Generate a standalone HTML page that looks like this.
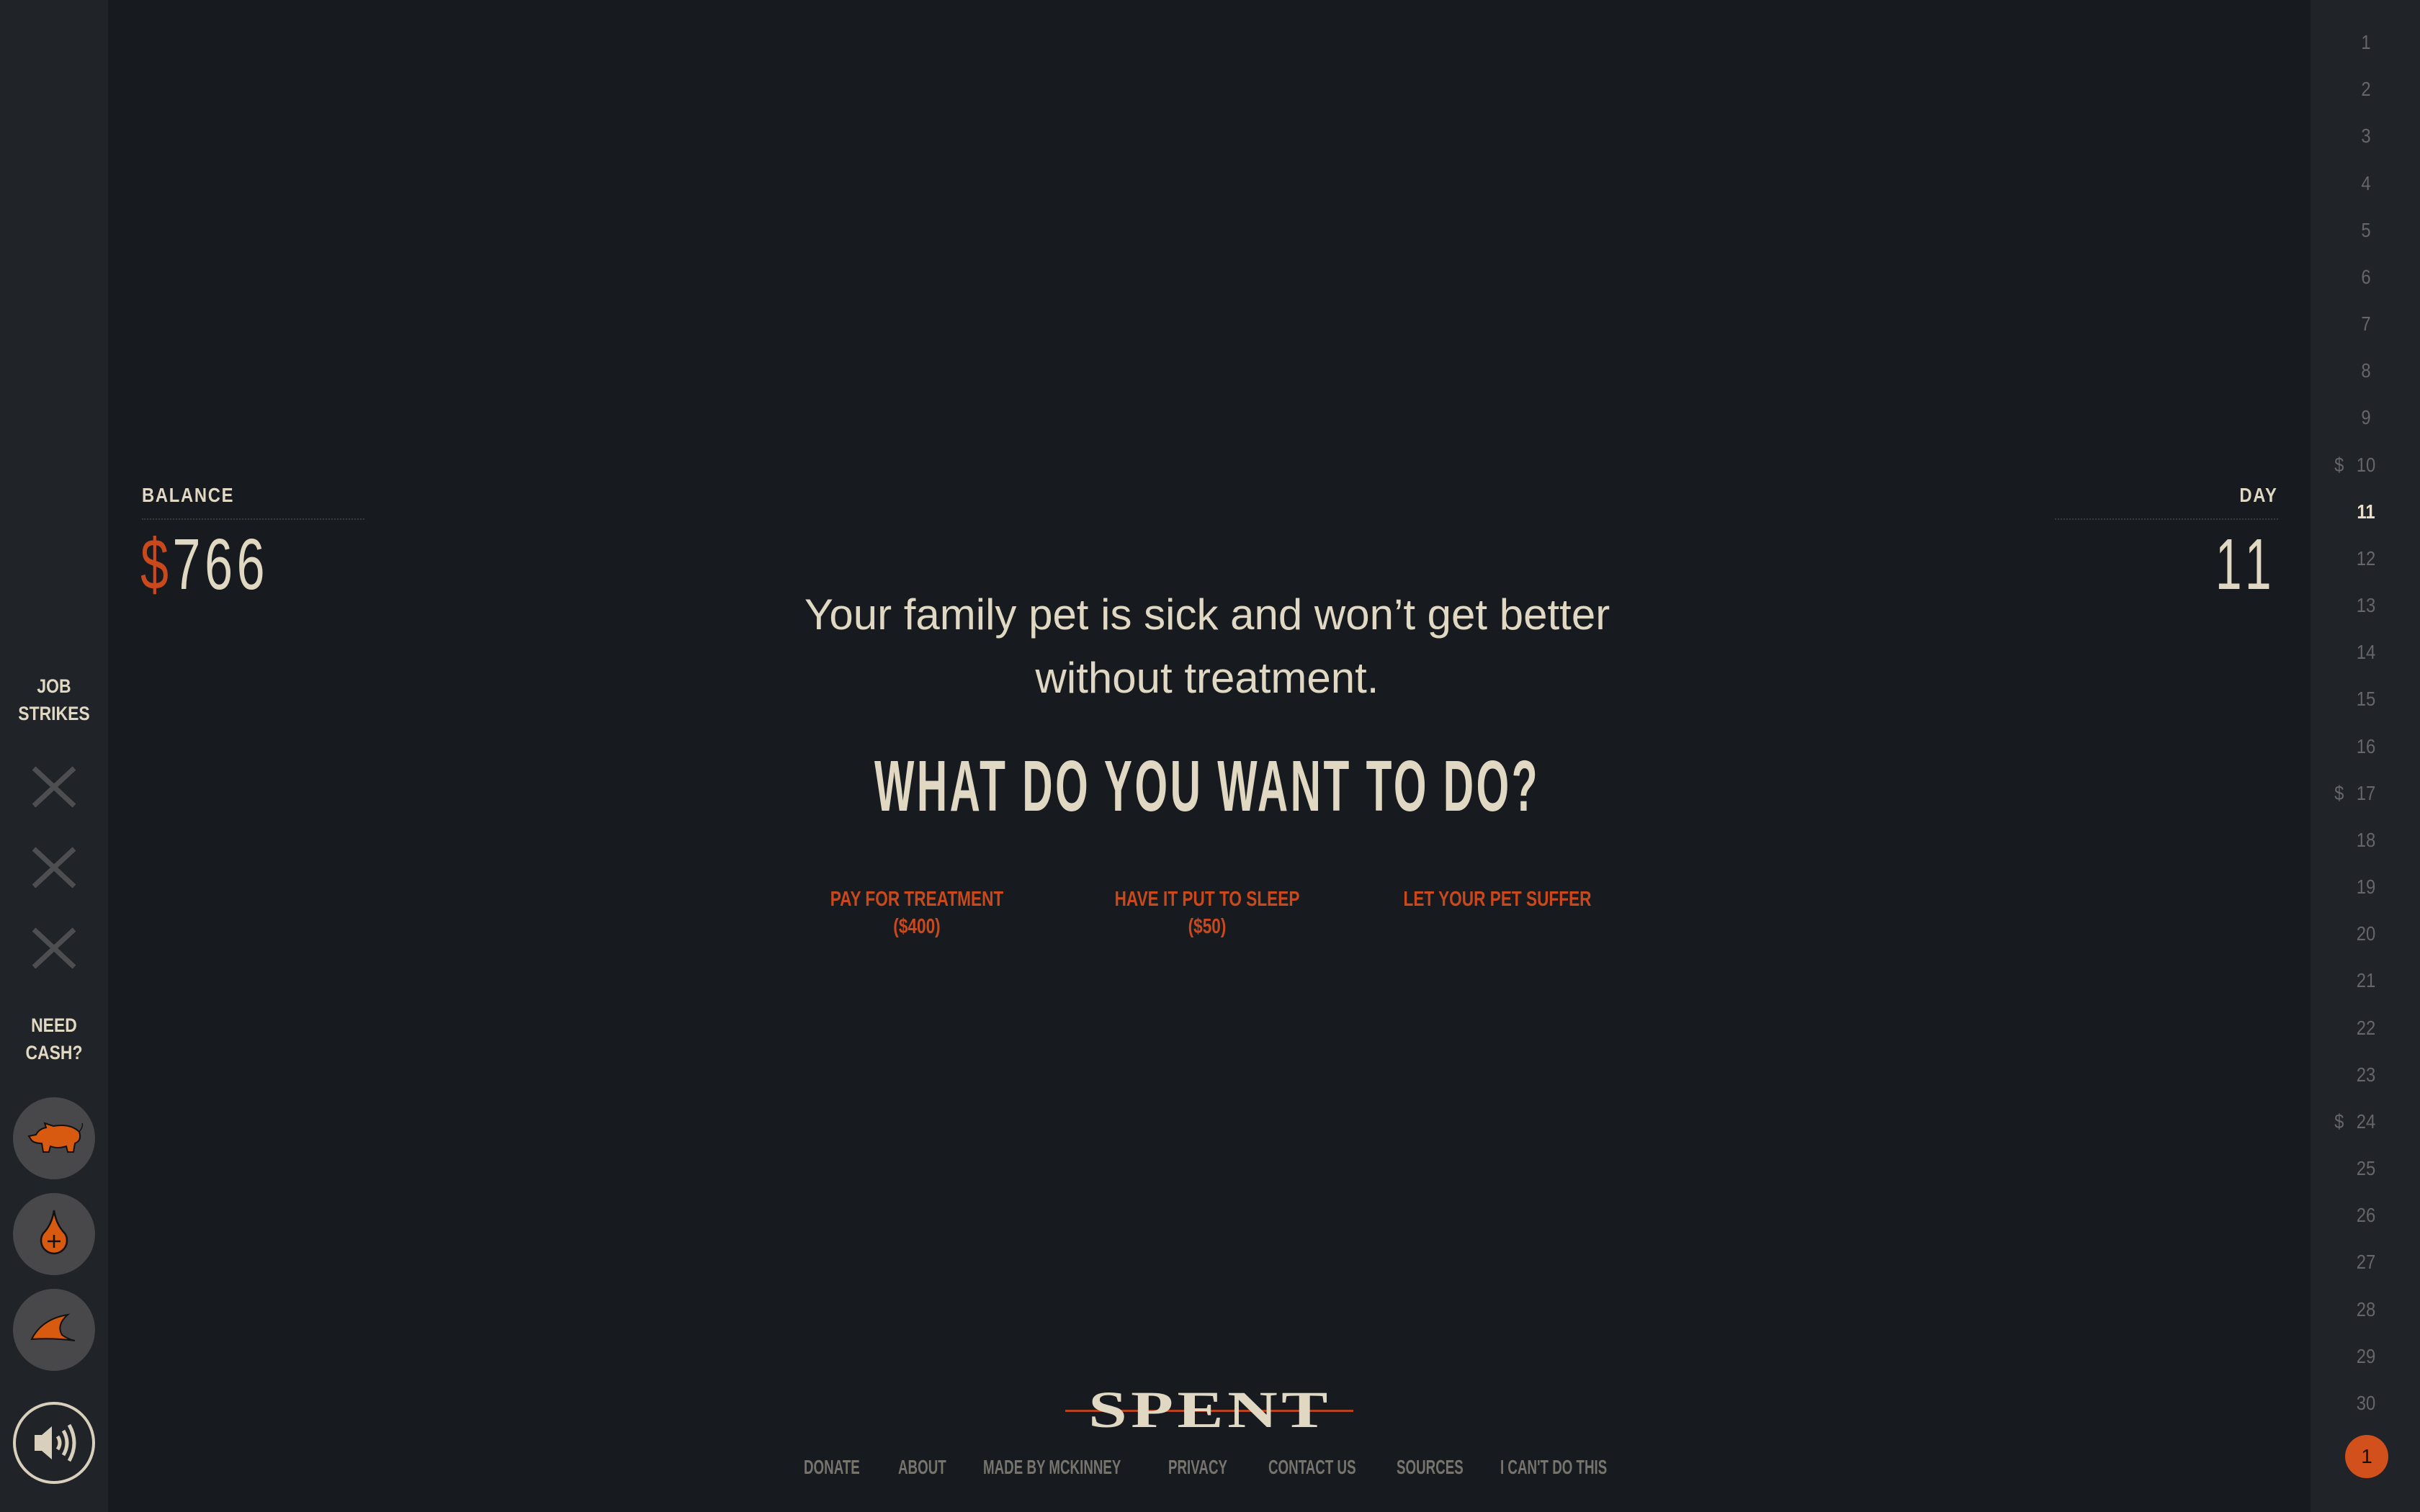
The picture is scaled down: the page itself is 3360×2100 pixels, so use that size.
<!DOCTYPE html>
<html><head><meta charset="utf-8"><style>
*{margin:0;padding:0;box-sizing:border-box}
body{width:3360px;height:2100px;background:#171b1f;position:relative;overflow:hidden;font-family:"Liberation Sans Narrow","Liberation Sans",sans-serif;color:#e0d8c2}
.abs{position:absolute}
.c{position:absolute;white-space:nowrap;transform:translateX(-50%) scaleX(.78)}
#lside{left:0;top:0;width:150px;height:2100px;background:#202327}
#rside{left:3208px;top:0;width:152px;height:2100px;background:#202327}
.lab{position:absolute;left:75px;transform:translateX(-50%) scaleX(.85);text-align:center;font-size:27px;line-height:38px;font-weight:bold;color:#e0d8c2;white-space:nowrap}
.circ{position:absolute;left:18px;width:114px;height:114px;border-radius:50%;background:#48474a}
.num{position:absolute;width:60px;left:3255px;text-align:center;font-size:28px;color:#66666a;transform:scaleX(.85)}
.dol{position:absolute;left:3240px;font-size:28px;color:#66666a;transform:scaleX(.85)}
.opt{color:#c9491c;font-size:29px;line-height:38px;font-weight:bold;text-align:center;top:1230px}
.foot{position:absolute;top:2022px;font-size:28px;font-weight:bold;color:#77746e;white-space:nowrap;transform:scaleX(.67);transform-origin:left}
</style></head><body>
<div id="lside" class="abs"></div>
<div id="rside" class="abs"></div>

<div class="abs" style="left:197px;top:672px;font-size:28px;font-weight:bold;letter-spacing:2px;transform:scaleX(.85);transform-origin:left">BALANCE</div>
<div class="abs" style="left:197px;top:720px;width:309px;border-top:2px dotted #3a3d40"></div>
<div class="abs" style="left:195px;top:727px;font-size:100px;letter-spacing:8px;transform:scaleX(.70);transform-origin:left"><span style="color:#c9491c">$</span>766</div>

<div class="abs" style="right:197px;top:672px;font-size:28px;font-weight:bold;letter-spacing:2px;transform:scaleX(.85);transform-origin:right">DAY</div>
<div class="abs" style="left:2853px;top:720px;width:310px;border-top:2px dotted #3a3d40"></div>
<div class="abs" style="right:197px;top:727px;font-size:100px;letter-spacing:14px;transform:scaleX(.66);transform-origin:right">11</div>

<div class="c" style="left:1676px;top:810px;font-size:60px;line-height:88px;text-align:center;transform:translateX(-50%) scaleX(1.0)">Your family pet is sick and won’t get better<br>without treatment.</div>
<div class="c" style="left:1676px;top:1035px;font-size:100px;font-weight:bold;letter-spacing:6px;transform:translateX(-50%) scaleX(.586)">WHAT DO YOU WANT TO DO?</div>
<div class="c opt" style="left:1273px">PAY FOR TREATMENT<br>($400)</div>
<div class="c opt" style="left:1676px">HAVE IT PUT TO SLEEP<br>($50)</div>
<div class="c opt" style="left:2079px">LET YOUR PET SUFFER</div>

<div class="lab" style="top:934px">JOB<br>STRIKES</div>
<svg class="abs" style="left:45px;top:1063px" width="60" height="300" stroke="#4e4e50" stroke-width="7">
<path d="M2,4L58,56M58,4L2,56"/><path d="M2,116L58,168M58,116L2,168"/><path d="M2,228L58,280M58,228L2,280"/></svg>
<div class="lab" style="top:1405px">NEED<br>CASH?</div>
<div class="circ" style="top:1524px"></div>
<div class="circ" style="top:1657px"></div>
<div class="circ" style="top:1790px"></div>
<div class="abs" style="left:18px;top:1947px;width:114px;height:114px;border-radius:50%;border:4px solid #d8d0bc"></div>
<svg class="abs" style="left:18px;top:1524px" width="114" height="114"><path d="M22,54 L32,52 Q36,44 46,42 L44,36 L56,40 Q80,36 92,48 Q96,60 86,64 L84,76 L76,76 L74,68 Q62,72 52,68 L50,76 L42,76 L40,64 Q30,64 26,60 Z" fill="#d85a10" stroke="#111" stroke-width="2"/><path d="M92,48 Q98,40 96,36" stroke="#111" stroke-width="1.5" fill="none"/></svg>
<svg class="abs" style="left:18px;top:1657px" width="114" height="114"><path d="M57,24 Q60,44 72,56 A18,18 0 1 1 42,56 Q54,44 57,24Z" fill="#d85a10" stroke="#111" stroke-width="2.5"/><path d="M57,58V76M48,67H66" stroke="#111" stroke-width="2.5"/></svg>
<svg class="abs" style="left:18px;top:1790px" width="114" height="114"><path d="M26,70 Q40,42 76,36 Q60,50 68,64 Q76,70 86,72 Q56,68 26,70Z" fill="#d85a10" stroke="#111" stroke-width="2"/></svg>
<svg class="abs" style="left:18px;top:1947px" width="114" height="114"><path d="M30,46H40L54,34V80L40,68H30Z" fill="#d8d0bc"/><path d="M62,48Q68,57 62,66M70,40Q80,57 70,74M78,32Q92,57 78,82" stroke="#d8d0bc" stroke-width="5" fill="none"/></svg>

<div id="days"></div>
<script>
var h='';for(var i=1;i<=30;i++){var y=60+(i-1)*65.17-17;h+='<div class="num" style="top:'+y+'px;'+(i==11?'color:#e8e0cc;font-weight:bold':'')+'">'+i+'</div>';if(i==10||i==17||i==24)h+='<div class="dol" style="top:'+y+'px">$</div>';}
document.getElementById('days').innerHTML=h;
</script>
<div class="abs" style="left:3256px;top:1993px;width:60px;height:60px;border-radius:50%;background:#d2501c;color:#111;font-size:28px;line-height:60px;text-align:center">1</div>

<div class="abs" style="left:1479px;top:1958px;width:400px;height:3px;background:#b5441e"></div>
<div class="c" style="left:1680px;top:1918px;font-family:'Liberation Serif',serif;font-weight:bold;font-size:72px;line-height:80px;letter-spacing:4px;transform:translateX(-50%) scaleX(1.34)">SPENT</div>

<div class="foot" style="left:1116px">DONATE</div>
<div class="foot" style="left:1247px">ABOUT</div>
<div class="foot" style="left:1365px">MADE BY MCKINNEY</div>
<div class="foot" style="left:1622px">PRIVACY</div>
<div class="foot" style="left:1761px">CONTACT US</div>
<div class="foot" style="left:1939px">SOURCES</div>
<div class="foot" style="left:2083px">I CAN'T DO THIS</div>
</body></html>
